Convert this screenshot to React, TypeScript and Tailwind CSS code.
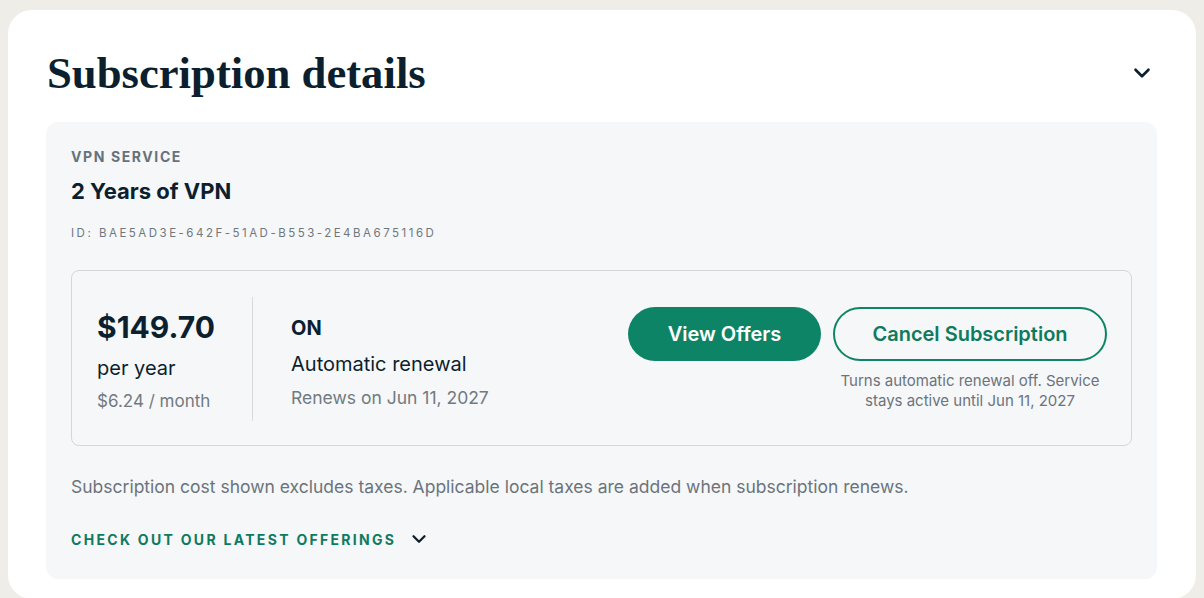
import { ChevronDown } from 'lucide-react';

const sans = { fontFamily: 'Inter, "Noto Sans", sans-serif' };

function PriceBlock() {
  return (
    <div className="flex items-start">
      <div className="w-[180px] pl-[25px] pt-[12px]">
        <div className="text-[30px] font-bold leading-[36px] text-[#0b1f2e]">$149.70</div>
        <div className="mt-[9px] text-[20px] leading-[28px] text-[#0b1f2e]">per year</div>
        <div className="mt-[7px] text-[17px] leading-[24px] text-[#717a81]">$6.24 / month</div>
      </div>
      <div className="h-[124px] w-px bg-[#d6dadd]" />
      <div className="pl-[38px] pt-[17px]">
        <div className="text-[20px] font-bold leading-[28px] text-[#0b1f2e]">ON</div>
        <div className="mt-[9px] text-[20px] leading-[26px] text-[#0b1f2e]">Automatic renewal</div>
        <div className="mt-[9px] text-[17.5px] leading-[24px] text-[#717a81]">Renews on Jun 11, 2027</div>
      </div>
    </div>
  );
}

function Actions() {
  return (
    <div className="ml-auto mr-[24px] flex items-start gap-[12px] pt-[10px]">
      <button className="h-[54px] w-[193px] rounded-full bg-[#0e8467] text-[20px] font-semibold text-white">
        View Offers
      </button>
      <div className="flex w-[274px] flex-col items-center">
        <button className="h-[54px] w-[274px] rounded-full border-2 border-[#0e8467] text-[20px] font-semibold text-[#0e7a5e]">
          Cancel Subscription
        </button>
        <div className="-mx-[3px] mt-[10px] w-[280px] text-center text-[15px] leading-[20px] text-[#6b747b]">
          Turns automatic renewal off. Service stays active until Jun 11, 2027
        </div>
      </div>
    </div>
  );
}

export default function App() {
  return (
    <div className="min-h-[598px] bg-[#efede8] px-[8px] pt-[10px]" style={sans}>
      <div className="rounded-[24px] bg-white pl-[38px] pr-[39px] pt-[40px] pb-[20px]">
        <div className="flex items-center justify-between pl-[1px]">
          <h1
            className="text-[44.7px] font-bold leading-[46px] text-[#0b1f2e]"
            style={{ fontFamily: '"Liberation Serif", "DejaVu Serif", serif' }}
          >
            Subscription details
          </h1>
          <ChevronDown className="mr-[2px] h-[26px] w-[26px] text-[#0b1f2e]" strokeWidth={2.4} />
        </div>

        <div className="mt-[26px] rounded-[12px] bg-[#f6f7f9] px-[25px] pt-[27px] pb-[29px]">
          <div className="text-[14px] font-bold tracking-[1.6px] leading-[16px] text-[#66727b]">VPN SERVICE</div>
          <div className="mt-[12px] text-[22px] font-bold leading-[28px] text-[#0b1f2e]">2 Years of VPN</div>
          <div className="mt-[21px] text-[11.5px] tracking-[2.5px] leading-[14px] text-[#6f777d]">
            ID: BAE5AD3E-642F-51AD-B553-2E4BA675116D
          </div>

          <div className="mt-[30px] flex h-[176px] rounded-[8px] border border-[#d3d7db] pt-[26px]">
            <PriceBlock />
            <Actions />
          </div>

          <div className="mt-[29px] text-[17.5px] leading-[24px] text-[#6b747b]">
            Subscription cost shown excludes taxes. Applicable local taxes are added when subscription renews.
          </div>
          <div className="mt-[29px] flex items-center gap-[12px]">
            <span className="text-[14px] font-bold tracking-[2.3px] text-[#0e7a5e]">CHECK OUT OUR LATEST OFFERINGS</span>
            <ChevronDown className="h-[22px] w-[22px] text-[#0b1f2e]" strokeWidth={2.5} />
          </div>
        </div>
      </div>
    </div>
  );
}
